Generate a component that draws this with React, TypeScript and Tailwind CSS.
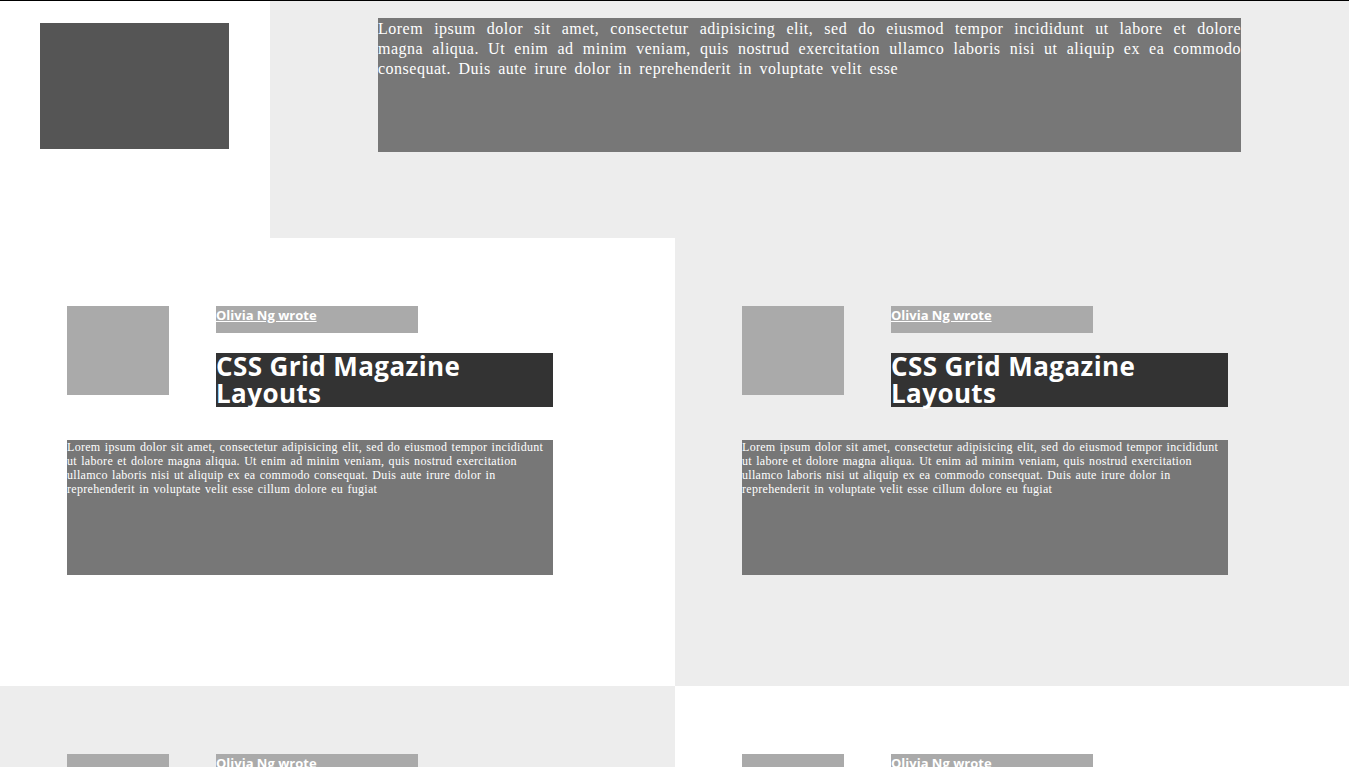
import React from "react";

const topLines = [
  "Lorem ipsum dolor sit amet, consectetur adipisicing elit, sed do eiusmod tempor incididunt ut labore et dolore",
  "magna aliqua. Ut enim ad minim veniam, quis nostrud exercitation ullamco laboris nisi ut aliquip ex ea commodo",
];
const topLast = "consequat. Duis aute irure dolor in reprehenderit in voluptate velit esse";

const bodyLines = [
  "Lorem ipsum dolor sit amet, consectetur adipisicing elit, sed do eiusmod tempor incididunt",
  "ut labore et dolore magna aliqua. Ut enim ad minim veniam, quis nostrud exercitation",
  "ullamco laboris nisi ut aliquip ex ea commodo consequat. Duis aute irure dolor in",
  "reprehenderit in voluptate velit esse cillum dolore eu fugiat",
];

function Card({ bg, wide }: { bg: string; wide: boolean }) {
  return (
    <div className={`${wide ? "w-[675px] shrink-0" : "flex-1"} h-[448px] ${bg} pt-[68px] pl-[67px]`}>
      <div className="flex">
        <div className="w-[102px] h-[89px] bg-[#aaaaaa]" />
        <div className="ml-[47px] flex flex-col">
          <div className="w-[202px] h-[27px] bg-[#aaaaaa]">
            <a
              href="#"
              className="text-white font-bold underline text-[13px] leading-[18px] block"
              style={{ fontFamily: "'Open Sans', sans-serif" }}
            >
              Olivia Ng wrote
            </a>
          </div>
          <h2
            className="mt-[20px] w-[337px] h-[54px] bg-[#333333] text-white font-bold text-[26px] leading-[27px] tracking-[0.4px]"
            style={{ fontFamily: "'Open Sans', sans-serif" }}
          >
            CSS Grid Magazine
            <br />
            Layouts
          </h2>
        </div>
      </div>
      <div
        className="mt-[33px] w-[486px] h-[135px] bg-[#777777] text-white text-[12px] leading-[14px] tracking-[0.3px] [word-spacing:1px]"
        style={{ fontFamily: "'Liberation Serif', serif" }}
      >
        {bodyLines.map((l, i) => (
          <div key={i} className="whitespace-nowrap">
            {l}
          </div>
        ))}
      </div>
    </div>
  );
}

export default function App() {
  return (
    <div className="w-[1349px] border-t border-black overflow-hidden">
      <div className="flex h-[237px]">
        <div className="w-[270px] shrink-0 bg-white pt-[22px] pl-[40px]">
          <div className="w-[189px] h-[126px] bg-[#555555]" />
        </div>
        <div className="flex-1 bg-[#ededed] pt-[17px] pl-[108px]">
          <div
            className="w-[863px] h-[134px] bg-[#777777] text-white text-[16px] leading-[20px] tracking-[0.5px] [word-spacing:3px] pt-[1px]"
            style={{ fontFamily: "'Liberation Serif', serif" }}
          >
            {topLines.map((l, i) => (
              <div key={i} className="text-justify [text-align-last:justify]">
                {l}
              </div>
            ))}
            <div>{topLast}</div>
          </div>
        </div>
      </div>
      <div className="flex">
        <Card bg="bg-white" wide={true} />
        <Card bg="bg-[#ededed]" wide={false} />
      </div>
      <div className="flex">
        <Card bg="bg-[#ededed]" wide={true} />
        <Card bg="bg-white" wide={false} />
      </div>
    </div>
  );
}
